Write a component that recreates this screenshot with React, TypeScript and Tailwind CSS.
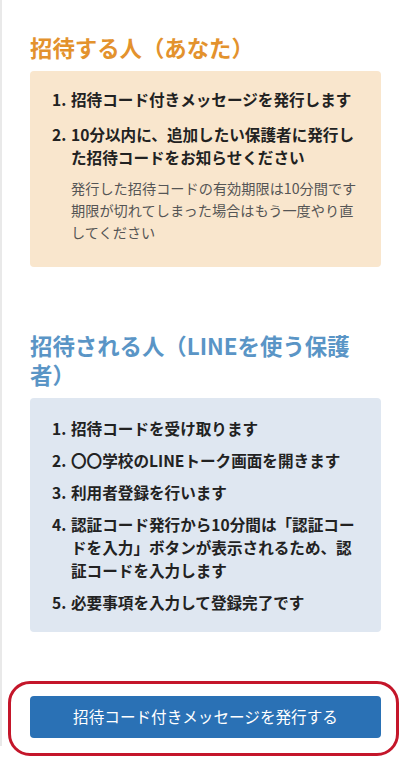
const font = { fontFamily: '"Noto Sans CJK JP", "Noto Sans", sans-serif' };

type Step = { text: string; note?: string[] };

const inviterSteps: Step[] = [
  { text: "招待コード付きメッセージを発行します" },
  {
    text: "10分以内に、追加したい保護者に発行した招待コードをお知らせください",
    note: ["発行した招待コードの有効期限は10分間です", "期限が切れてしまった場合はもう一度やり直してください"],
  },
];

const inviteeSteps: Step[] = [
  { text: "招待コードを受け取ります" },
  { text: "〇〇学校のLINEトーク画面を開きます" },
  { text: "利用者登録を行います" },
  { text: "認証コード発行から10分間は「認証コードを入力」ボタンが表示されるため、認証コードを入力します" },
  { text: "必要事項を入力して登録完了です" },
];

function StepList({ steps, gap }: { steps: Step[]; gap: string }) {
  return (
    <ol className={`flex flex-col ${gap}`}>
      {steps.map((s, i) => (
        <li key={i} className="flex">
          <span className="w-[19px] shrink-0 text-[15.6px] font-bold leading-[23px] text-[#222]">{i + 1}.</span>
          <div className="min-w-0 flex-1">
            <p className="text-[15.6px] font-bold leading-[23px] text-[#222]">{s.text}</p>
            {s.note && (
              <div className="mt-2 text-[14.2px] leading-[22px] text-[#555]">
                {s.note.map((n) => (
                  <p key={n}>{n}</p>
                ))}
              </div>
            )}
          </div>
        </li>
      ))}
    </ol>
  );
}

export default function App() {
  return (
    <div className="min-h-[773px] bg-white" style={font}>
      <div className="border-l-2 border-[#e9e9e9] px-[28px] pb-2 pt-[33px]">
        <h2 className="mb-[9px] text-[22.4px] font-bold leading-[29px] text-[#e3922d]">招待する人（あなた）</h2>
        <div className="rounded bg-[#f9e6cd] pb-[24px] pl-[22px] pr-[20px] pt-[17px]">
          <StepList steps={inviterSteps} gap="gap-[12px]" />
        </div>

        <h2 className="mb-[9px] mt-[64px] text-[22.4px] font-bold leading-[29px] text-[#5a95c6]">
          招待される人（LINEを使う保護者）
        </h2>
        <div className="rounded bg-[#dfe7f1] pb-[18px] pl-[22px] pr-[20px] pt-[19px]">
          <StepList steps={inviteeSteps} gap="gap-[9px]" />
        </div>

        <div className="relative mt-[64px]">
          <button className="h-[42px] w-full rounded bg-[#2a71b5] text-[15.6px] text-white">
            招待コード付きメッセージを発行する
          </button>
          <div className="pointer-events-none absolute -bottom-[18px] -left-[22px] -right-[18px] -top-[15px] rounded-[22px] border-[3px] border-[#c4162a]" />
        </div>
      </div>
    </div>
  );
}
